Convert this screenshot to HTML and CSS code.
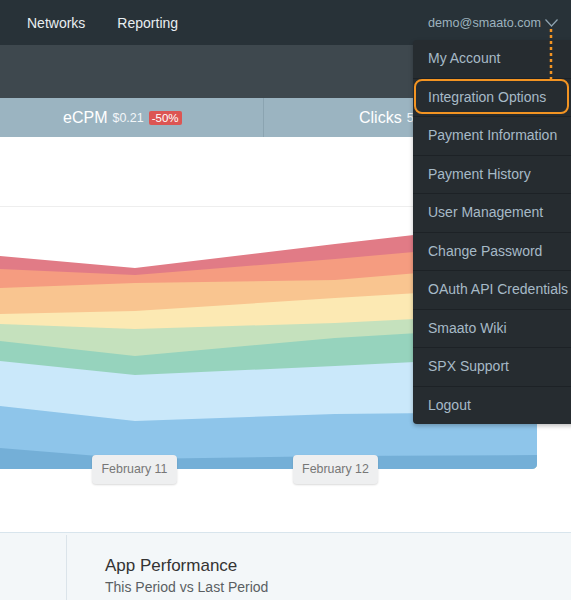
FILE: index.html
```html
<!DOCTYPE html>
<html lang="en">
<head>
    <meta charset="UTF-8">
    <meta name="viewport" content="width=device-width, initial-scale=1.0">
    <title>Smaato Dashboard</title>
    <link rel="stylesheet" href="styles.css">
</head>
<body>

    <header class="topbar">
        <a class="nav-link">Networks</a>
        <a class="nav-link">Reporting</a>
        <div class="account">
            demo@smaato.com
            <svg class="chevron" width="13" height="8" viewBox="0 0 13 8">
                <polyline points="0.5,0.5 6.5,7 12.5,0.5" fill="none" stroke="#8fa4b1" stroke-width="1.2"/>
            </svg>
        </div>
    </header>

    <div class="subbar"></div>

    <div class="stats">
        <div class="stat stat-first">
            <span class="stat-name">eCPM</span>
            <span class="stat-value">$0.21</span>
            <span class="badge">-50%</span>
        </div>
        <div class="stat stat-second">
            <span class="stat-name">Clicks</span>
            <span class="stat-value">5,214</span>
        </div>
    </div>

    <section class="chart">
        <div class="gridline"></div>
        <!-- stacked area chart, y values are page pixels -->
        <svg class="area-chart" width="537" height="262" viewBox="0 206 537 262">
            <defs>
                <clipPath id="chartClip">
                    <rect x="-10" y="206" width="547" height="262" rx="5"/>
                </clipPath>
            </defs>
            <g clip-path="url(#chartClip)">
                <polygon fill="#e17b86" points="0,255 135,267 335,243 537,220 537,468 0,468"/>
                <polygon fill="#f59c80" points="0,268 135,274 335,258 537,240 537,468 0,468"/>
                <polygon fill="#f9c590" points="0,287 135,282 335,279 537,262 537,468 0,468"/>
                <polygon fill="#fce9b3" points="0,313 135,310 335,297 537,285 537,468 0,468"/>
                <polygon fill="#c5e1bd" points="0,323 135,328 335,322 537,312 537,468 0,468"/>
                <polygon fill="#96d3bd" points="0,340 135,355 335,337 537,325 537,468 0,468"/>
                <polygon fill="#cae8fa" points="0,360 135,374 335,365 537,355 537,468 0,468"/>
                <polygon fill="#8ec5ea" points="0,405 135,420 335,413 537,411 537,468 0,468"/>
                <polygon fill="#74afd7" points="0,447 135,458 335,455 537,454 537,468 0,468"/>
            </g>
        </svg>
        <div class="date-labels">
            <span class="date-label label-one">February 11</span>
            <span class="date-label label-two">February 12</span>
        </div>
    </section>

    <section class="summary">
        <div class="summary-side"></div>
        <div class="summary-body">
            <h2 class="summary-title">App Performance</h2>
            <p class="summary-sub">This Period vs Last Period</p>
        </div>
    </section>

    <!-- account dropdown -->
    <ul class="dropdown">
        <li>My Account</li>
        <li>Integration Options</li>
        <li>Payment Information</li>
        <li>Payment History</li>
        <li>User Management</li>
        <li>Change Password</li>
        <li>OAuth API Credentials</li>
        <li>Smaato Wiki</li>
        <li>SPX Support</li>
        <li>Logout</li>
    </ul>

    <!-- annotation -->
    <div class="highlight"></div>
    <svg class="pointer" width="4" height="50" viewBox="0 0 4 50">
        <line x1="2" y1="0" x2="2" y2="50" stroke="#f39422" stroke-width="2.5" stroke-dasharray="3 3"/>
    </svg>

</body>
</html>
```

FILE: styles.css
```css
body {
    margin: 0;
    width: 571px;
    height: 600px;
    overflow: hidden;
    position: relative;
    font-family: "Liberation Sans", Arial, sans-serif;
    background-color: #fff;
}

.topbar {
    display: flex;
    align-items: center;
    height: 45px;
    padding: 0 13px 0 27px;
    background-color: #283238;
}

.nav-link {
    color: #e8eef1;
    font-size: 14px;
    margin-right: 32px;
}

.account {
    margin-left: auto;
    display: flex;
    align-items: center;
    color: #9db2be;
    font-size: 12.6px;
}

.chevron {
    margin-left: 4px;
    margin-top: 1px;
}

.subbar {
    height: 53px;
    background-color: #3e484e;
}

.stats {
    display: flex;
    height: 39px;
    background-color: #9bb4c1;
    color: #fff;
}

.stat {
    display: flex;
    align-items: center;
    gap: 5px;
}

.stat-first {
    width: 264px;
    box-sizing: border-box;
    padding-left: 63px;
    border-right: 1px solid #8ba4b1;
}

.stat-second {
    padding-left: 95px;
}

.stat-name {
    font-size: 16px;
}

.stat-value {
    font-size: 12.5px;
    color: #f2f6f8;
}

.badge {
    background-color: #dc5553;
    color: #fff;
    font-size: 11.5px;
    padding: 1px 3px;
    border-radius: 2px;
    line-height: 12px;
}

.chart {
    height: 395px;
    padding-top: 69px;
    box-sizing: border-box;
}

.gridline {
    border-top: 1px solid #eeeeee;
}

.area-chart {
    display: block;
}

.date-labels {
    display: flex;
    margin-top: -14px;
    position: relative;
}

.date-label {
    box-sizing: border-box;
    width: 85px;
    height: 29px;
    line-height: 29px;
    text-align: center;
    font-size: 12.4px;
    color: #777;
    background-color: #eeeff0;
    border-radius: 4px;
    box-shadow: 0 1px 2px rgba(0, 0, 0, 0.15);
}

.label-one {
    margin-left: 92px;
}

.label-two {
    margin-left: 116px;
}

.summary {
    display: flex;
    height: 68px;
    background-color: #f3f7f9;
    border-top: 1px solid #d8e5ed;
}

.summary-side {
    width: 66px;
    margin-top: 2px;
    border-right: 1px solid #dbe4ea;
}

.summary-body {
    padding: 23px 0 0 38px;
}

.summary-title {
    margin: 0;
    font-size: 17px;
    font-weight: normal;
    line-height: 20px;
    color: #333;
}

.summary-sub {
    margin: 2px 0 0;
    font-size: 14px;
    line-height: 18px;
    color: #5a5f63;
}

.dropdown {
    position: absolute;
    top: 40px;
    left: 413px;
    width: 175px;
    margin: 0;
    padding: 0;
    list-style: none;
    background-color: #262c30;
    border-radius: 4px;
    box-shadow: 0 2px 4px rgba(0, 0, 0, 0.25);
}

.dropdown li {
    height: 37.5px;
    line-height: 37.5px;
    padding-left: 15px;
    font-size: 14px;
    color: #a6bac7;
}

.dropdown li + li {
    border-top: 1px solid #1d2226;
}

.highlight {
    position: absolute;
    top: 79px;
    left: 414px;
    width: 155px;
    height: 35px;
    box-sizing: border-box;
    border: 2px solid #f39422;
    border-radius: 8px;
}

.pointer {
    position: absolute;
    top: 29px;
    left: 549px;
}
```
